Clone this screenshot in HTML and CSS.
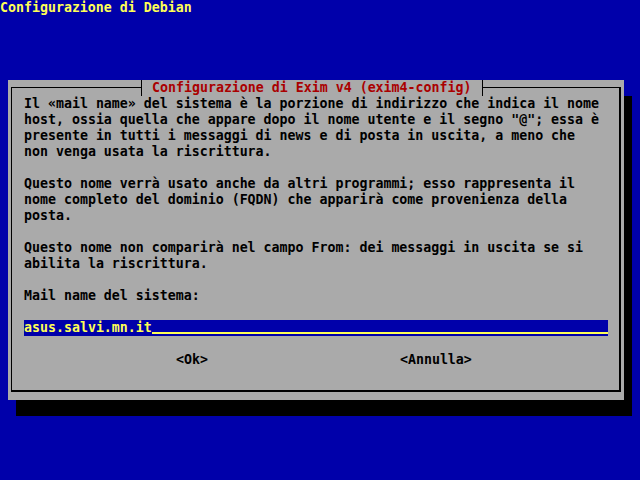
FILE: index.html
```html
<!DOCTYPE html>
<html lang="it">
<head>
<meta charset="utf-8">
<title>Configurazione di Debian</title>
<link rel="stylesheet" href="styles.css">
</head>
<body>
<div class="screen">
  <div class="header">Configurazione di Debian</div>
  <div class="dialog">
    <div class="frame">
      <div class="title">Configurazione di Exim v4 (exim4-config)</div>
      <div class="text">Il «mail name» del sistema è la porzione di indirizzo che indica il nome
host, ossia quella che appare dopo il nome utente e il segno "@"; essa è
presente in tutti i messaggi di news e di posta in uscita, a meno che
non venga usata la riscrittura.

Questo nome verrà usato anche da altri programmi; esso rappresenta il
nome completo del dominio (FQDN) che apparirà come provenienza della
posta.

Questo nome non comparirà nel campo From: dei messaggi in uscita se si
abilita la riscrittura.

Mail name del sistema:
</div>
      <div class="entry"><span class="entry-value">asus.salvi.mn.it</span><span class="entry-fill"></span></div>
      <div class="buttons">
        <span class="button">&lt;Ok&gt;</span>
        <span class="button">&lt;Annulla&gt;</span>
      </div>
    </div>
  </div>
</div>
</body>
</html>
```

FILE: styles.css
```css
html, body {
  margin: 0;
  padding: 0;
  background: #0000aa;
}

.screen {
  width: 640px;
  height: 480px;
  font-family: "DejaVu Sans Mono", "Liberation Mono", monospace;
  font-weight: bold;
  font-size: 13.288px;
  line-height: 16px;
  overflow: hidden;
}

.header {
  height: 16px;
  color: #ffff55;
  white-space: pre;
}

.dialog {
  margin: 64px 0 0 8px;
  width: 616px;
  height: 320px;
  box-sizing: border-box;
  padding: 7px 3px 8px 3px;
  background: #aaaaaa;
  box-shadow: 8px 16px 0 #000000;
}

.frame {
  position: relative;
  height: 100%;
  box-sizing: border-box;
  border-left: 1px solid #000;
  border-top: 1px solid #000;
  border-right: 2px solid #000;
  border-bottom: 2px solid #000;
  padding: 8px 0 0 12px;
}

.title {
  position: absolute;
  top: -8px;
  left: 129px;
  height: 16px;
  padding: 0 11px 0 10px;
  border-left: 1px solid #000;
  border-right: 1px solid #000;
  background: #aaaaaa;
  color: #aa0000;
  white-space: pre;
}

.text {
  color: #000;
  white-space: pre;
  height: 224px;
}

.entry {
  display: flex;
  width: 584px;
  height: 16px;
  background: #0000aa;
  color: #ffff55;
}

.entry-value {
  white-space: pre;
}

.entry-fill {
  flex: 1;
  background: linear-gradient(to bottom, transparent 12px, #ffff55 12px, #ffff55 14px, transparent 14px);
}

.buttons {
  display: flex;
  gap: 192px;
  margin-top: 16px;
  padding-left: 152px;
  height: 16px;
  color: #000;
}

.button {
  white-space: pre;
}
```
